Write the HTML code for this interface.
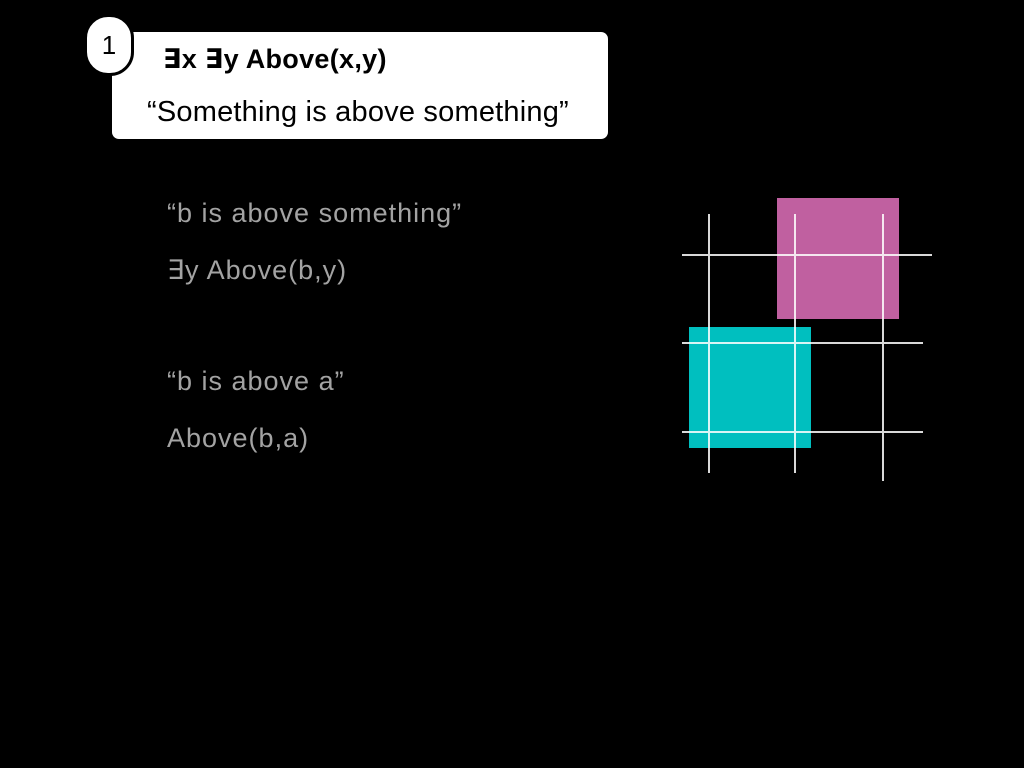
<!DOCTYPE html>
<html><head><style>
body{margin:0;width:1024px;height:768px;background:#000;position:relative;overflow:hidden;font-family:"Liberation Sans","DejaVu Sans",sans-serif}
.box{position:absolute;left:112px;top:32px;width:496px;height:107px;background:#fff;border-radius:7px}
.circ{position:absolute;left:84px;top:14px;width:44px;height:56px;background:#fff;border:3px solid #000;border-radius:24px;font-size:26px;text-align:center;line-height:56px;color:#000}
.t{position:absolute;white-space:nowrap}
.g{color:#a3a3a3;font-size:27px;letter-spacing:1px}
</style></head><body>
<div class="box"></div>
<div class="circ">1</div>
<div class="t" style="left:163px;top:44px;font-size:27px;font-weight:bold;color:#000;letter-spacing:0.3px">∃x ∃y Above(x,y)</div>
<div class="t" style="left:147px;top:96px;font-size:29px;color:#000;letter-spacing:0.2px">“Something is above something”</div>
<div class="t g" style="left:167px;top:198px">“b is above something”</div>
<div class="t g" style="left:167px;top:255px">∃y Above(b,y)</div>
<div class="t g" style="left:167px;top:366px">“b is above a”</div>
<div class="t g" style="left:167px;top:423px">Above(b,a)</div>
<svg style="position:absolute;left:0;top:0" width="1024" height="768">
<rect x="777" y="198" width="122" height="121" fill="#c060a0"/>
<rect x="689" y="327" width="122" height="121" fill="#00bfbf"/>
<g stroke="#fff" stroke-width="2" opacity="0.85">
<line x1="709" y1="214" x2="709" y2="473"/>
<line x1="795" y1="214" x2="795" y2="473"/>
<line x1="883" y1="214" x2="883" y2="481"/>
<line x1="682" y1="255" x2="932" y2="255"/>
<line x1="682" y1="343" x2="923" y2="343"/>
<line x1="682" y1="432" x2="923" y2="432"/>
</g>
</svg>
</body></html>
